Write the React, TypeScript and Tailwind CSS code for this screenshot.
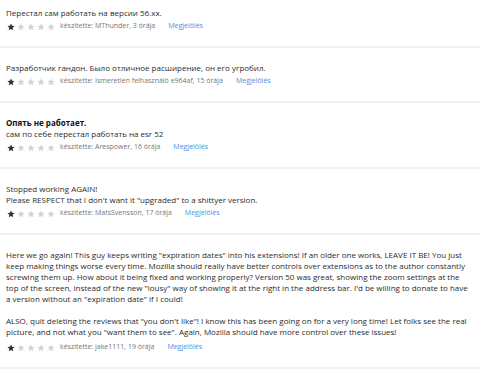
import React from "react";

type Review = {
  title?: string;
  lines: string[];
  author: string;
  ago: string;
  long?: boolean;
};

const reviews: Review[] = [
  {
    lines: ["Перестал сам работать на версии 56.хх."],
    author: "MThunder",
    ago: "3 órája",
  },
  {
    lines: ["Разработчик гандон. Было отличное расширение, он его угробил."],
    author: "Ismeretlen felhasználó e964af",
    ago: "15 órája",
  },
  {
    title: "Опять не работает.",
    lines: ["сам по себе перестал работать на esr 52"],
    author: "Arespower",
    ago: "16 órája",
  },
  {
    lines: [
      "Stopped working AGAIN!",
      'Please RESPECT that I don\'t want it "upgraded" to a shittyer version.',
    ],
    author: "MatsSvensson",
    ago: "17 órája",
  },
  {
    lines: [
      'Here we go again! This guy keeps writing "expiration dates" into his extensions! If an older one works, LEAVE IT BE! You just',
      "keep making things worse every time. Mozilla should really have better controls over extensions as to the author constantly",
      "screwing them up. How about it being fixed and working properly? Version 50 was great, showing the zoom settings at the",
      'top of the screen, instead of the new "lousy" way of showing it at the right in the address bar. I\'d be willing to donate to have',
      'a version without an "expiration date" if I could!',
      "",
      'ALSO, quit deleting the reviews that "you don\'t like"! I know this has been going on for a very long time! Let folks see the real',
      'picture, and not what you "want them to see". Again, Mozilla should have more control over these issues!',
    ],
    author: "jake1111",
    ago: "19 órája",
    long: true,
  },
];

function Star({ filled }: { filled: boolean }) {
  return (
    <svg width="8" height="8" viewBox="0 0 24 24" className={filled ? "text-[#333]" : "text-[#d4d4d4]"}>
      <path
        fill="currentColor"
        d="M12 1.5l3.2 7.1 7.6.7-5.8 5.1 1.8 7.6L12 18l-6.8 4 1.8-7.6-5.8-5.1 7.6-.7z"
      />
    </svg>
  );
}

function ReviewCard({ review, first }: { review: Review; first?: boolean }) {
  return (
    <div className={(first ? "pt-[7px]" : "pt-[14px]") + " pb-[14px] px-[6px] border-b-2 border-[#f1f1f1]"}>
      {review.title && <div className="font-bold text-[#111] leading-[11px]">{review.title}</div>}
      {review.lines.map((line, i) => (
        <div key={i} className="h-[11px] leading-[11px] whitespace-nowrap">
          {line}
        </div>
      ))}

      {/* rating + meta */}
      <div className={(review.long ? "mt-[5px]" : "mt-[3px]") + " flex items-center h-[11px] text-[7px]"}>
        <div className="flex gap-[2px] pl-[1px]">
          {[0, 1, 2, 3, 4].map((i) => (
            <Star key={i} filled={i === 0} />
          ))}
        </div>
        <span className="ml-[5px] text-[#777]">
          készítette: {review.author}, {review.ago}
        </span>
        <span className="ml-[13px] text-[#4a90e2]">Megjelölés</span>
      </div>
    </div>
  );
}

export default function App() {
  return (
    <div
      className="w-[480px] h-[376px] overflow-hidden bg-white text-[#2b2b2b] text-[8px]"
      style={{ fontFamily: '"Open Sans", sans-serif' }}
    >
      {reviews.map((r, i) => (
        <ReviewCard key={i} review={r} first={i === 0} />
      ))}
    </div>
  );
}
